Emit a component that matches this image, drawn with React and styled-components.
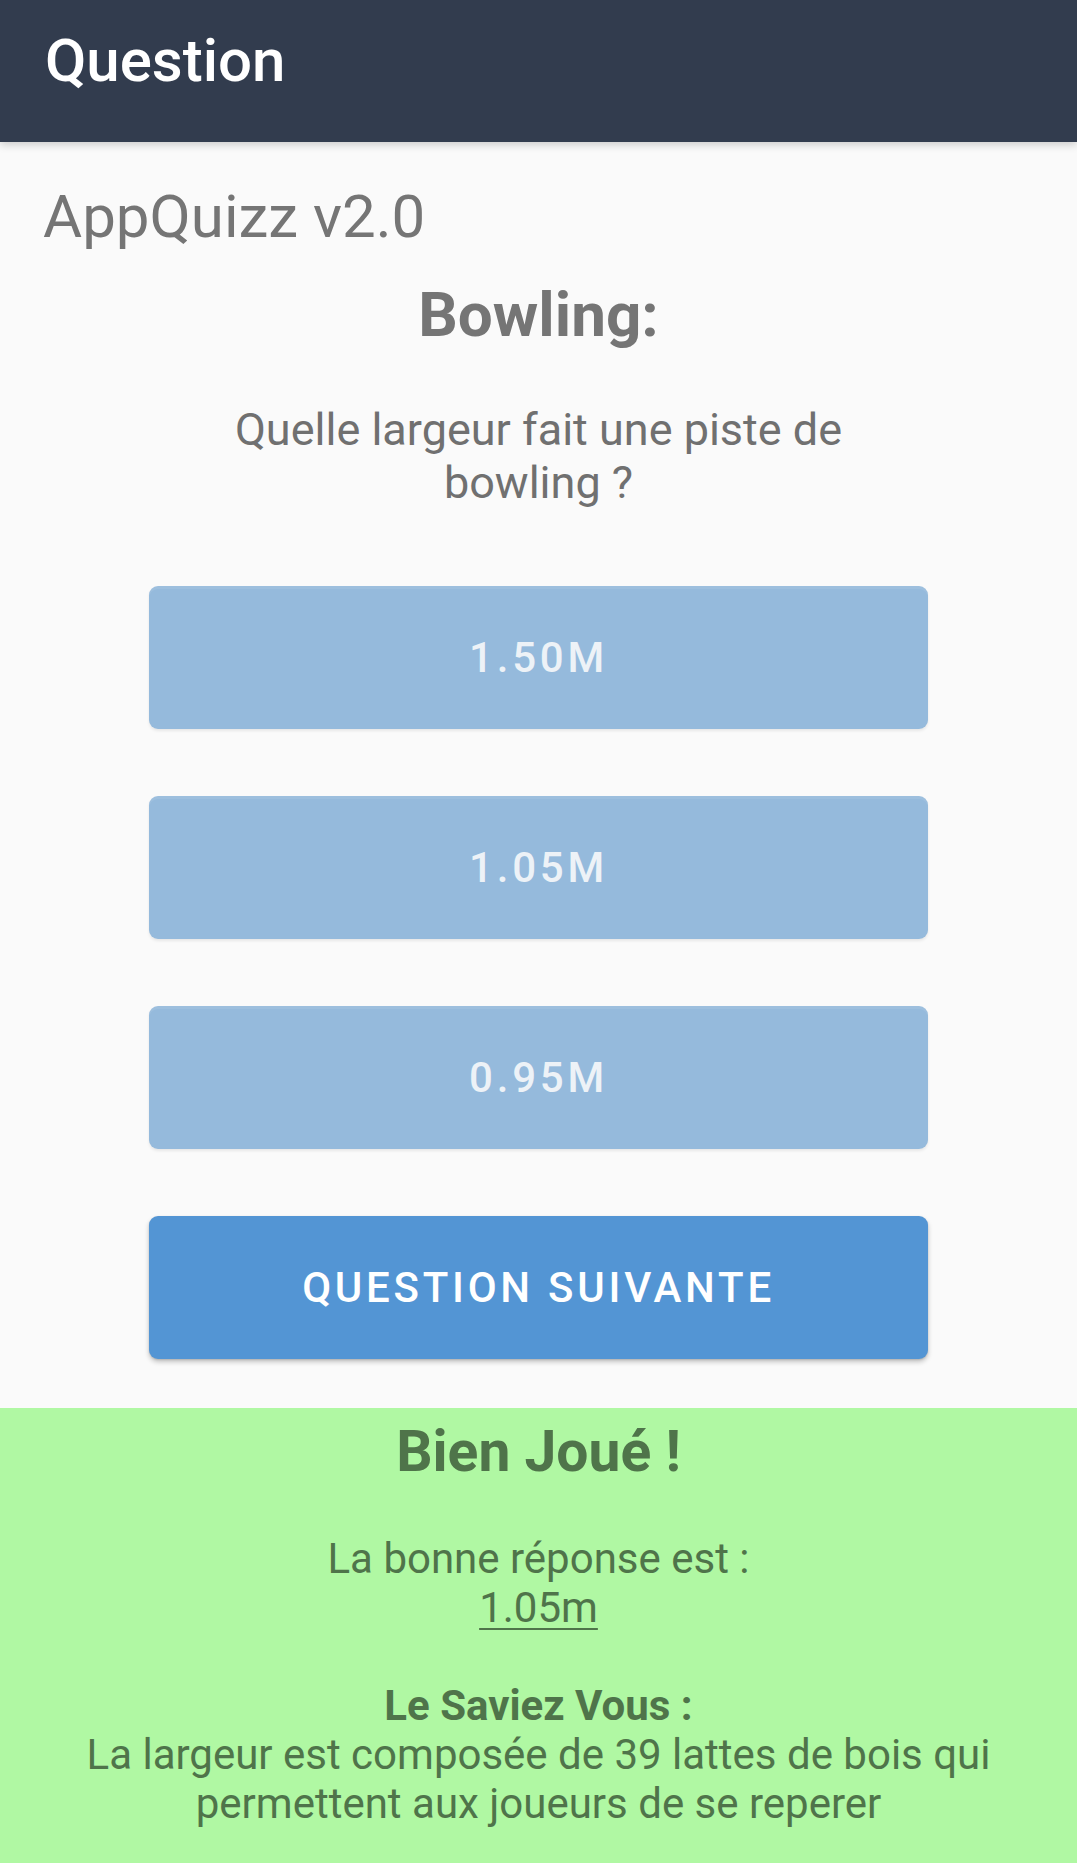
import React from "react";
import styled, { createGlobalStyle } from "styled-components";

const GlobalStyle = createGlobalStyle`
  html, body {
    margin: 0;
    padding: 0;
    background: #fafafa;
  }
  body {
    font-family: Roboto, "Noto Sans", "Liberation Sans", sans-serif;
  }
  * { box-sizing: border-box; }
`;

const Page = styled.div`
  display: flex;
  flex-direction: column;
  min-height: 100vh;
  background: #fafafa;
`;

const AppBar = styled.header`
  height: 142px;
  background: #323c4e;
  padding: 25px 0 0 45px;
  box-shadow: 0 3px 8px rgba(0, 0, 0, 0.18);
  position: relative;
  z-index: 1;
`;

const AppBarTitle = styled.h1`
  margin: 0;
  font-size: 60px;
  font-weight: 500;
  color: #ffffff;
  line-height: normal;
`;

const Main = styled.main`
  display: flex;
  flex-direction: column;
  padding: 39px 0 49px;
`;

const Version = styled.div`
  margin-left: 43px;
  font-size: 60px;
  color: #757575;
  line-height: normal;
`;

const Category = styled.h2`
  margin: 26px 0 0;
  text-align: center;
  font-size: 62px;
  font-weight: 700;
  color: #757575;
  line-height: normal;
`;

const QuestionText = styled.p`
  margin: 52px auto 0;
  max-width: 720px;
  text-align: center;
  font-size: 45px;
  color: #707070;
  line-height: normal;
`;

const Answers = styled.div`
  display: flex;
  flex-direction: column;
  gap: 67px;
  width: 779px;
  margin: 77px auto 0;
`;

const Button = styled.button`
  height: 143px;
  width: 100%;
  border: none;
  border-radius: 9px;
  font-family: Roboto, "Noto Sans", "Liberation Sans", sans-serif;
  font-size: 42px;
  font-weight: 500;
  letter-spacing: 3.75px;
  text-transform: uppercase;
  background: ${(p) => (p.$primary ? "#5395d4" : "#95badc")};
  color: ${(p) => (p.$primary ? "#ffffff" : "#edf2f7")};
  box-shadow: ${(p) =>
    p.$primary
      ? "0 3px 5px rgba(0,0,0,0.22), 0 1px 2px rgba(0,0,0,0.12)"
      : "0 2px 3px rgba(0,0,0,0.08), inset 0 3px 0 rgba(255,255,255,0.08)"};
  cursor: ${(p) => (p.disabled ? "default" : "pointer")};
`;

const Result = styled.section`
  flex: 1;
  background: #b0f8a3;
  color: #4f744a;
  padding: 10px 40px 30px;
  text-align: center;
`;

const ResultTitle = styled.h3`
  margin: 0 0 49px;
  font-size: 57px;
  font-weight: 700;
  line-height: normal;
`;

const ResultText = styled.p`
  margin: ${(p) => (p.$spaced ? "49px 0 0" : "0")};
  font-size: 42px;
  line-height: normal;
`;

const Underlined = styled.span`
  text-decoration: underline;
  text-underline-offset: 6px;
  text-decoration-thickness: 2px;
`;

const Strong = styled.strong`
  font-weight: 700;
`;

const answers = ["1.50m", "1.05m", "0.95m"];

export default function App() {
  return (
    <Page>
      <GlobalStyle />
      <AppBar>
        <AppBarTitle>Question</AppBarTitle>
      </AppBar>
      <Main>
        <Version>AppQuizz v2.0</Version>
        <Category>Bowling:</Category>
        <QuestionText>Quelle largeur fait une piste de bowling ?</QuestionText>
        <Answers>
          {answers.map((a) => (
            <Button key={a} disabled>
              {a}
            </Button>
          ))}
          <Button $primary>Question suivante</Button>
        </Answers>
      </Main>
      <Result>
        <ResultTitle>Bien Joué !</ResultTitle>
        <ResultText>
          La bonne réponse est :
          <br />
          <Underlined>1.05m</Underlined>
        </ResultText>
        <ResultText $spaced>
          <Strong>Le Saviez Vous :</Strong>
          <br />
          La largeur est composée de 39 lattes de bois qui permettent aux
          joueurs de se reperer
        </ResultText>
      </Result>
    </Page>
  );
}
